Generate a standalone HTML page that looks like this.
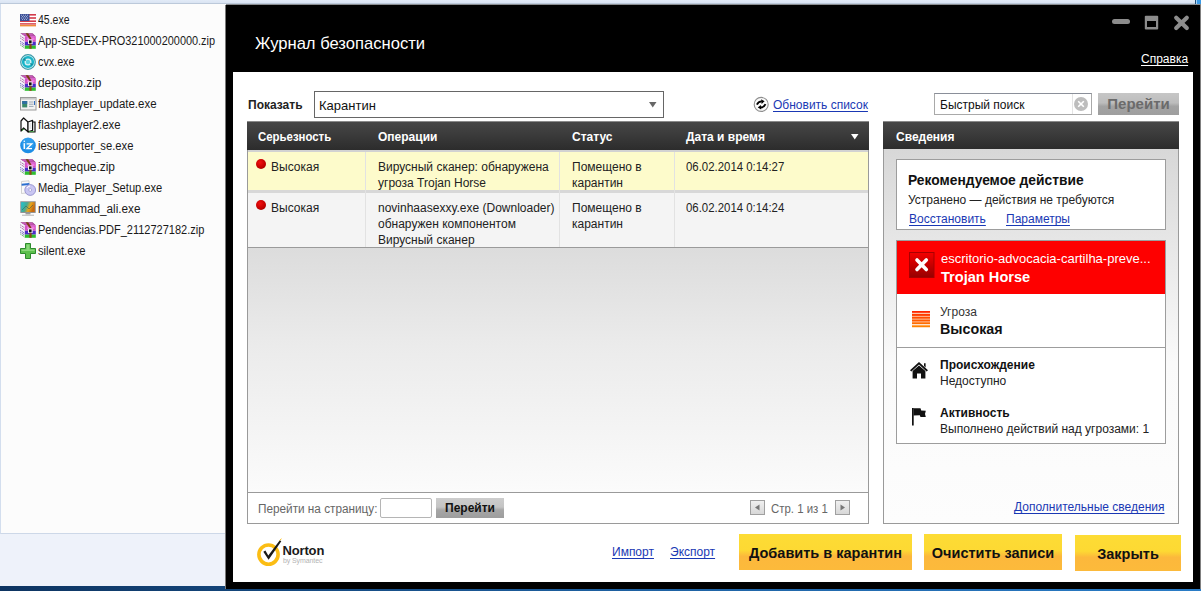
<!DOCTYPE html>
<html><head><meta charset="utf-8">
<style>
*{margin:0;padding:0;box-sizing:border-box}
html,body{width:1201px;height:591px;overflow:hidden;background:#eef2fa;font-family:"Liberation Sans",sans-serif;font-size:12px;color:#222}
.a{position:absolute;white-space:nowrap}
#topband{left:0;top:0;width:1201px;height:5px;background:linear-gradient(#e2ebf7,#dbe5f3 50%,#b4c2d4 75%,#6e6a64)}
#left{left:0;top:4px;width:226px;height:530px;background:#fcfcfc;border-left:1px solid #d3deee;border-bottom:1px solid #cdd8e8}
#taskbar{left:0;top:586px;width:1201px;height:5px;background:linear-gradient(90deg,#0d3461,#1d5f9f 50%,#2a7cc6)}
.fi{left:38px;font-size:12px;line-height:16px;color:#1a1a1a}
.ic{left:20px;width:16px;height:16px}
#win{left:225px;top:5px;width:976px;height:584px;background:#000;border-left:1px solid #7a7a7a;border-right:1px solid #808080}
#inner{left:233px;top:72px;width:960px;height:510px;background:#fff}
#title{left:255px;top:34px;font-size:16.6px;line-height:20px;color:#fff}
.a.lnk,.lnk{color:#1a38b4;text-decoration:underline;text-underline-offset:2px}
.hdr{background:linear-gradient(#474747,#2c2c2c);border-top:1px solid #8a8a8a}
.ht{font-weight:bold;color:#fff;font-size:12px;line-height:16px}
.cell{font-size:12px;line-height:16px;color:#222}
.btn{background:linear-gradient(#fddc35 0%,#fdd933 45%,#fcb83c 62%,#fcba3b 100%);font-weight:bold;font-size:14.5px;color:#111;text-align:center;padding-top:1px}
</style></head><body>
<div id="topband" class="a"></div>
<div class="a" style="left:1195px;top:0;width:1px;height:4px;background:#1d4f7a"></div><div class="a" style="left:1196px;top:0;width:1px;height:4px;background:#a8d4f8"></div><div class="a" style="left:1197px;top:0;width:4px;height:4px;background:#3a9ae6"></div>
<div id="left" class="a"></div>
<div id="taskbar" class="a"></div>

<!-- file list -->
<div class="a fi" style="top:12px;transform:scaleX(0.875);transform-origin:0 0">45.exe</div>
<div class="a fi" style="top:33px;transform:scaleX(0.909);transform-origin:0 0">App-SEDEX-PRO321000200000.zip</div>
<div class="a fi" style="top:54px;transform:scaleX(0.897);transform-origin:0 0">cvx.exe</div>
<div class="a fi" style="top:75px;transform:scaleX(0.99);transform-origin:0 0">deposito.zip</div>
<div class="a fi" style="top:96px;transform:scaleX(0.955);transform-origin:0 0">flashplayer_update.exe</div>
<div class="a fi" style="top:117px;transform:scaleX(0.944);transform-origin:0 0">flashplayer2.exe</div>
<div class="a fi" style="top:138px;transform:scaleX(0.935);transform-origin:0 0">iesupporter_se.exe</div>
<div class="a fi" style="top:159px;transform:scaleX(0.995);transform-origin:0 0">imgcheque.zip</div>
<div class="a fi" style="top:180px;transform:scaleX(0.927);transform-origin:0 0">Media_Player_Setup.exe</div>
<div class="a fi" style="top:201px;transform:scaleX(0.979);transform-origin:0 0">muhammad_ali.exe</div>
<div class="a fi" style="top:222px;transform:scaleX(0.918);transform-origin:0 0">Pendencias.PDF_2112727182.zip</div>
<div class="a fi" style="top:243px;transform:scaleX(0.937);transform-origin:0 0">silent.exe</div>


<!-- file icons -->
<svg class="a" style="left:20px;top:14px" width="16" height="13" viewBox="0 0 16 13">
<rect x="0" y="0" width="16" height="12.4" fill="#fff"/>
<rect x="0" y="0" width="16" height="1.6" fill="#d33a4a"/>
<rect x="0" y="3.2" width="16" height="1.6" fill="#d33a4a"/>
<rect x="0" y="6.4" width="16" height="1.6" fill="#d33a4a"/>
<rect x="0" y="9.2" width="16" height="1.4" fill="#d33a4a"/>
<rect x="0" y="10.8" width="16" height="1.6" fill="#f08a3c"/>
<rect x="0" y="0" width="9.5" height="7" fill="#3b4f96"/>
<path d="M1 1.2h1M3 1.2h1M5 1.2h1M7 1.2h1M2 2.6h1M4 2.6h1M6 2.6h1M1 4h1M3 4h1M5 4h1M7 4h1M2 5.4h1M4 5.4h1M6 5.4h1" stroke="#c8d0ea" stroke-width="0.8"/>
</svg>
<svg class="a" style="left:20px;top:33px" width="16" height="16" viewBox="0 0 16 16">
<path d="M0 0.3 L12.6 0.3 L15.8 3.2 L4.6 3.2 Z" fill="#9c3a8c"/>
<path d="M1.5 0.9 L12.2 0.9 L14.4 2.7 L4.4 2.7 Z" fill="#c85ab8"/>
<rect x="4.6" y="3.2" width="11.2" height="5.6" fill="#d452c4"/>
<rect x="7" y="4.5" width="7.5" height="2.5" fill="#ef7ae0"/>
<rect x="4.6" y="8.8" width="11.2" height="3.8" fill="#4a2ec8"/>
<rect x="4.6" y="12.6" width="11.2" height="3.2" fill="#2fbe2f"/>
<path d="M0 0.3 L4.6 3.2 L4.6 15.8 L0 12.8 Z" fill="#f4f4fa"/>
<path d="M0.4 3 L4.2 5.6 M0.4 5.2 L4.2 7.8" stroke="#8a2a78" stroke-width="0.9" stroke-dasharray="1 0.8"/>
<path d="M0.4 8.4 L4.2 11 M0.4 10.2 L4.2 12.8" stroke="#3a2aa0" stroke-width="0.9" stroke-dasharray="1 0.8"/>
<path d="M0.4 12 L4.2 14.6" stroke="#2a9a2a" stroke-width="0.9" stroke-dasharray="1 0.8"/>
<path d="M5.6 0.3 L8.2 0.3 L11.6 6 L9.6 6 Z" fill="#7a4010"/>
<rect x="9.4" y="10" width="2.2" height="5.8" fill="#8a4a14"/>
<rect x="8" y="6.6" width="4.6" height="4.4" fill="#f0f0f0"/>
<rect x="9" y="7.4" width="2.6" height="3" fill="#111"/>
</svg>
<svg class="a" style="left:20px;top:54px" width="16" height="16" viewBox="0 0 16 16">
<circle cx="8" cy="8" r="7.3" fill="#d9f2f5" stroke="#3c9aa8" stroke-width="1.2"/>
<circle cx="8" cy="8" r="4.8" fill="none" stroke="#19b5c9" stroke-width="2.6"/>
<path d="M2.5 6 L5 4 L6 7 Z" fill="#1a8b9c"/>
<path d="M13.5 10 L11 12 L10 9 Z" fill="#1a8b9c"/>
<circle cx="8" cy="8" r="2.2" fill="#5bd3e0"/>
</svg>
<svg class="a" style="left:20px;top:75px" width="16" height="16" viewBox="0 0 16 16">
<path d="M0 0.3 L12.6 0.3 L15.8 3.2 L4.6 3.2 Z" fill="#9c3a8c"/>
<path d="M1.5 0.9 L12.2 0.9 L14.4 2.7 L4.4 2.7 Z" fill="#c85ab8"/>
<rect x="4.6" y="3.2" width="11.2" height="5.6" fill="#d452c4"/>
<rect x="7" y="4.5" width="7.5" height="2.5" fill="#ef7ae0"/>
<rect x="4.6" y="8.8" width="11.2" height="3.8" fill="#4a2ec8"/>
<rect x="4.6" y="12.6" width="11.2" height="3.2" fill="#2fbe2f"/>
<path d="M0 0.3 L4.6 3.2 L4.6 15.8 L0 12.8 Z" fill="#f4f4fa"/>
<path d="M0.4 3 L4.2 5.6 M0.4 5.2 L4.2 7.8" stroke="#8a2a78" stroke-width="0.9" stroke-dasharray="1 0.8"/>
<path d="M0.4 8.4 L4.2 11 M0.4 10.2 L4.2 12.8" stroke="#3a2aa0" stroke-width="0.9" stroke-dasharray="1 0.8"/>
<path d="M0.4 12 L4.2 14.6" stroke="#2a9a2a" stroke-width="0.9" stroke-dasharray="1 0.8"/>
<path d="M5.6 0.3 L8.2 0.3 L11.6 6 L9.6 6 Z" fill="#7a4010"/>
<rect x="9.4" y="10" width="2.2" height="5.8" fill="#8a4a14"/>
<rect x="8" y="6.6" width="4.6" height="4.4" fill="#f0f0f0"/>
<rect x="9" y="7.4" width="2.6" height="3" fill="#111"/>
</svg>
<svg class="a" style="left:20px;top:97px" width="17" height="14" viewBox="0 0 17 14">
<rect x="0.5" y="0.5" width="15.5" height="12.5" fill="#f2f2f2" stroke="#9a9a9a"/>
<rect x="1" y="1" width="14.5" height="1.6" fill="#c9c9c9"/>
<rect x="2.2" y="4" width="5" height="6.4" fill="#3a8a6a"/>
<rect x="2.2" y="4" width="5" height="3" fill="#2f6fa0"/>
<path d="M9 5h4.5M9 7.2h4.5M9 9.4h4.5" stroke="#9aa6b4" stroke-width="1"/>
<rect x="14" y="4" width="1" height="4" fill="#3470c0"/>
</svg>
<svg class="a" style="left:20px;top:117px" width="16" height="16" viewBox="0 0 16 16">
<path d="M1 4 L3.6 1 L8 5 L8 14.8 L3.6 11 L1 14 Z" fill="#fff" stroke="#111" stroke-width="1.2" stroke-linejoin="round"/>
<path d="M8 5 L12.6 3.4 L12.6 13.4 L8 14.8 Z" fill="#fff" stroke="#111" stroke-width="1.2" stroke-linejoin="round"/>
<path d="M12.6 5 L15 5 L15 15 L8 15" fill="none" stroke="#111" stroke-width="1.2"/>
<path d="M2 13.6 L4 12" stroke="#3aa83a" stroke-width="1"/>
<path d="M9 14.6 L14 14.6" stroke="#3aa83a" stroke-width="0.8"/>
<path d="M9.5 7h2M9.5 9h2M9.5 11h2" stroke="#bbb" stroke-width="0.7"/>
</svg>
<svg class="a" style="left:20px;top:137px" width="16" height="17" viewBox="0 0 16 17">
<circle cx="8" cy="8.5" r="7.8" fill="#1e8ee6"/>
<circle cx="8" cy="6.5" r="6" fill="#3aa6f0" opacity="0.6"/>
<path d="M4.3 6.2 L4.3 12" stroke="#fff" stroke-width="1.5"/>
<circle cx="4.3" cy="4.3" r="0.8" fill="#fff"/>
<path d="M6.6 6.8 L11.8 6.8 L7 11.6 L12 11.6" fill="none" stroke="#fff" stroke-width="1.3"/>
</svg>
<svg class="a" style="left:20px;top:159px" width="16" height="16" viewBox="0 0 16 16">
<path d="M0 0.3 L12.6 0.3 L15.8 3.2 L4.6 3.2 Z" fill="#9c3a8c"/>
<path d="M1.5 0.9 L12.2 0.9 L14.4 2.7 L4.4 2.7 Z" fill="#c85ab8"/>
<rect x="4.6" y="3.2" width="11.2" height="5.6" fill="#d452c4"/>
<rect x="7" y="4.5" width="7.5" height="2.5" fill="#ef7ae0"/>
<rect x="4.6" y="8.8" width="11.2" height="3.8" fill="#4a2ec8"/>
<rect x="4.6" y="12.6" width="11.2" height="3.2" fill="#2fbe2f"/>
<path d="M0 0.3 L4.6 3.2 L4.6 15.8 L0 12.8 Z" fill="#f4f4fa"/>
<path d="M0.4 3 L4.2 5.6 M0.4 5.2 L4.2 7.8" stroke="#8a2a78" stroke-width="0.9" stroke-dasharray="1 0.8"/>
<path d="M0.4 8.4 L4.2 11 M0.4 10.2 L4.2 12.8" stroke="#3a2aa0" stroke-width="0.9" stroke-dasharray="1 0.8"/>
<path d="M0.4 12 L4.2 14.6" stroke="#2a9a2a" stroke-width="0.9" stroke-dasharray="1 0.8"/>
<path d="M5.6 0.3 L8.2 0.3 L11.6 6 L9.6 6 Z" fill="#7a4010"/>
<rect x="9.4" y="10" width="2.2" height="5.8" fill="#8a4a14"/>
<rect x="8" y="6.6" width="4.6" height="4.4" fill="#f0f0f0"/>
<rect x="9" y="7.4" width="2.6" height="3" fill="#111"/>
</svg>
<svg class="a" style="left:20px;top:180px" width="16" height="16" viewBox="0 0 16 16">
<path d="M1.5 1.5 L9 0.8 L9.5 12.5 L1.5 13.5 Z" fill="#fafafa" stroke="#c8c8c8" stroke-width="0.8"/>
<path d="M1.6 3.8 L9.3 3 L9.3 5 L1.6 5.8 Z" fill="#2a6fd0"/>
<circle cx="10.2" cy="10" r="5.4" fill="#c9c6f2" stroke="#8a86c8" stroke-width="0.8"/>
<circle cx="10.2" cy="10" r="1.4" fill="#fff" stroke="#8a86c8" stroke-width="0.6"/>
<path d="M7 8 A3.5 3.5 0 0 1 10 6" stroke="#fff" stroke-width="1" fill="none"/>
</svg>
<svg class="a" style="left:20px;top:201px" width="16" height="16" viewBox="0 0 16 16">
<defs><linearGradient id="mg" x1="0" y1="0" x2="1" y2="0.3"><stop offset="0" stop-color="#19c7d6"/><stop offset="0.45" stop-color="#4aa890"/><stop offset="0.7" stop-color="#e9a61c"/><stop offset="1" stop-color="#c86a10"/></linearGradient></defs>
<rect x="0.3" y="0.3" width="15.4" height="11.6" fill="#888"/>
<rect x="1.2" y="1.2" width="13.6" height="9.8" fill="url(#mg)"/>
<path d="M2 9 L6 5 L9 8 L13 4" stroke="#2a5a50" stroke-width="1" fill="none" opacity="0.5"/>
<rect x="5.5" y="12" width="5" height="1.5" fill="#9a9a9a"/>
<rect x="2" y="13.6" width="12" height="1.4" fill="#c8c8c8"/>
</svg>
<svg class="a" style="left:20px;top:222px" width="16" height="16" viewBox="0 0 16 16">
<path d="M0 0.3 L12.6 0.3 L15.8 3.2 L4.6 3.2 Z" fill="#9c3a8c"/>
<path d="M1.5 0.9 L12.2 0.9 L14.4 2.7 L4.4 2.7 Z" fill="#c85ab8"/>
<rect x="4.6" y="3.2" width="11.2" height="5.6" fill="#d452c4"/>
<rect x="7" y="4.5" width="7.5" height="2.5" fill="#ef7ae0"/>
<rect x="4.6" y="8.8" width="11.2" height="3.8" fill="#4a2ec8"/>
<rect x="4.6" y="12.6" width="11.2" height="3.2" fill="#2fbe2f"/>
<path d="M0 0.3 L4.6 3.2 L4.6 15.8 L0 12.8 Z" fill="#f4f4fa"/>
<path d="M0.4 3 L4.2 5.6 M0.4 5.2 L4.2 7.8" stroke="#8a2a78" stroke-width="0.9" stroke-dasharray="1 0.8"/>
<path d="M0.4 8.4 L4.2 11 M0.4 10.2 L4.2 12.8" stroke="#3a2aa0" stroke-width="0.9" stroke-dasharray="1 0.8"/>
<path d="M0.4 12 L4.2 14.6" stroke="#2a9a2a" stroke-width="0.9" stroke-dasharray="1 0.8"/>
<path d="M5.6 0.3 L8.2 0.3 L11.6 6 L9.6 6 Z" fill="#7a4010"/>
<rect x="9.4" y="10" width="2.2" height="5.8" fill="#8a4a14"/>
<rect x="8" y="6.6" width="4.6" height="4.4" fill="#f0f0f0"/>
<rect x="9" y="7.4" width="2.6" height="3" fill="#111"/>
</svg>
<svg class="a" style="left:20px;top:243px" width="16" height="16" viewBox="0 0 16 16">
<path d="M5.5 0.5 H10.5 V5.5 H15.5 V10.5 H10.5 V15.5 H5.5 V10.5 H0.5 V5.5 H5.5 Z" fill="#5cc04c" stroke="#2c8a2c" stroke-width="1"/>
<path d="M6.5 1.5 H9.5 V6.5 H14.5 V8 H1.5 V6.5 H6.5 Z" fill="#8ad87a"/>
</svg>

<!-- window -->
<div id="win" class="a"></div>
<div id="title" class="a">Журнал безопасности</div>
<div id="inner" class="a"></div>
<div class="a" style="left:1141px;top:51px;color:#fff;text-decoration:underline;text-underline-offset:2px;font-size:12px;line-height:16px">Справка</div>

<!-- show row -->
<div class="a" style="left:248px;top:97px;font-weight:bold;font-size:12px;line-height:16px;color:#222">Показать</div>
<div class="a" style="left:314px;top:91px;width:350px;height:27px;border:1px solid #666;background:#fff"></div>
<div class="a" style="left:319px;top:98px;font-size:13px;line-height:16px;color:#111">Карантин</div>
<div class="a" style="left:773px;top:97px;font-size:12px;line-height:16px" ><span class="lnk">Обновить список</span></div>
<div class="a" style="left:934px;top:93px;width:158px;height:22px;border:1px solid #a9a9a9;border-top-color:#8a8f99;background:#fff"></div>
<div class="a" style="left:940px;top:97px;font-size:12px;line-height:16px;color:#111">Быстрый поиск</div>
<div class="a" style="left:1098px;top:93px;width:81px;height:22px;background:linear-gradient(#c6c6c6,#bdbdbd 45%,#a3a3a3 60%,#9e9e9e)"></div>
<div class="a" style="left:1098px;top:94px;width:81px;text-align:center;font-weight:bold;font-size:15px;line-height:20px;color:#6b6b6b">Перейти</div>

<!-- table -->
<div class="a" style="left:247px;top:121px;width:622px;height:403px;border:1px solid #9a9a9a;background:#fff"></div>
<div class="a hdr" style="left:247px;top:121px;width:622px;height:29px"></div>
<div class="a ht" style="left:258px;top:129px;transform:scaleX(0.95);transform-origin:0 0">Серьезность</div>
<div class="a ht" style="left:378px;top:129px">Операции</div>
<div class="a ht" style="left:572px;top:129px">Статус</div>
<div class="a ht" style="left:686px;top:129px">Дата и время</div>
<!-- list body -->
<div class="a" style="left:248px;top:248px;width:620px;height:244px;background:linear-gradient(#dcdcdc,#ebebeb 40%,#fbfbfb)"></div>
<div class="a" style="left:248px;top:150px;width:620px;height:2px;background:#d2d2d2"></div>
<div class="a" style="left:248px;top:152px;width:620px;height:38px;background:#fdfbcb"></div>
<div class="a" style="left:248px;top:190px;width:620px;height:3px;background:#d8d8d8"></div>
<div class="a" style="left:248px;top:193px;width:620px;height:54px;background:#f4f4f4"></div>
<div class="a" style="left:248px;top:247px;width:620px;height:1px;background:#9a9a9a"></div>
<div class="a" style="left:365px;top:152px;width:1px;height:95px;background:#e2e2e2"></div>
<div class="a" style="left:559px;top:152px;width:1px;height:95px;background:#e2e2e2"></div>
<div class="a" style="left:674px;top:152px;width:1px;height:95px;background:#e2e2e2"></div>
<div class="a" style="left:248px;top:492px;width:620px;height:1px;background:#9a9a9a"></div>

<div class="a" style="left:256px;top:159px;width:10px;height:10px;border-radius:50%;background:radial-gradient(circle at 40% 35%,#f21010,#c00000 60%,#8a0000)"></div>
<div class="a cell" style="left:271px;top:159px">Высокая</div>
<div class="a cell" style="left:378px;top:159px">Вирусный сканер: обнаружена<br>угроза Trojan Horse</div>
<div class="a cell" style="left:572px;top:159px">Помещено в<br>карантин</div>
<div class="a cell" style="left:686px;top:159px;transform:scaleX(0.95);transform-origin:0 0">06.02.2014 0:14:27</div>

<div class="a" style="left:256px;top:200px;width:10px;height:10px;border-radius:50%;background:radial-gradient(circle at 40% 35%,#f21010,#c00000 60%,#8a0000)"></div>
<div class="a cell" style="left:271px;top:200px">Высокая</div>
<div class="a cell" style="left:378px;top:200px">novinhaasexxy.exe (Downloader)<br>обнаружен компонентом<br>Вирусный сканер</div>
<div class="a cell" style="left:572px;top:200px">Помещено в<br>карантин</div>
<div class="a cell" style="left:686px;top:200px;transform:scaleX(0.95);transform-origin:0 0">06.02.2014 0:14:24</div>

<!-- pager -->
<div class="a cell" style="left:258px;top:501px;color:#666;transform:scaleX(0.98);transform-origin:0 0">Перейти на страницу:</div>
<div class="a" style="left:380px;top:498px;width:52px;height:20px;border-radius:2px;border:1px solid #b5b5b5;background:#fff"></div>
<div class="a" style="left:436px;top:498px;width:68px;height:20px;background:linear-gradient(#cdcdcd,#c4c4c4 45%,#a6a6a6 60%,#9d9d9d);text-align:center;font-weight:bold;font-size:12px;line-height:20px;color:#111">Перейти</div>
<div class="a" style="left:750px;top:500px;width:15px;height:15px;border:1px solid #a0a0a0;background:linear-gradient(#f0f0f0,#d8d8d8)"></div>
<div class="a cell" style="left:771px;top:501px;color:#666;transform:scaleX(0.95);transform-origin:0 0">Стр. 1 из 1</div>
<div class="a" style="left:835px;top:500px;width:15px;height:15px;border:1px solid #a0a0a0;background:linear-gradient(#f0f0f0,#d8d8d8)"></div>

<!-- right panel -->
<div class="a" style="left:883px;top:121px;width:296px;height:403px;border:1px solid #9a9a9a;background:linear-gradient(#d3d3d3,#fafafa 60%,#fdfdfd)"></div>
<div class="a hdr" style="left:883px;top:121px;width:296px;height:28px"></div>
<div class="a ht" style="left:896px;top:129px">Сведения</div>
<div class="a" style="left:896px;top:159px;width:270px;height:71px;border:1px solid #9d9d9d;background:#fff"></div>
<div class="a" style="left:908px;top:173px;font-weight:bold;font-size:13.8px;line-height:16px;color:#111">Рекомендуемое действие</div>
<div class="a cell" style="left:908px;top:192px">Устранено — действия не требуются</div>
<div class="a cell lnk" style="left:909px;top:211px">Восстановить</div>
<div class="a cell lnk" style="left:1006px;top:211px">Параметры</div>

<div class="a" style="left:896px;top:240px;width:270px;height:204px;border:1px solid #9d9d9d;background:#fff"></div>
<div class="a" style="left:897px;top:241px;width:268px;height:53px;background:#fe0000"></div>
<div class="a" style="left:941px;top:251px;font-size:13px;line-height:16px;color:#fff">escritorio-advocacia-cartilha-preve...</div>
<div class="a" style="left:941px;top:268px;font-weight:bold;font-size:14.6px;line-height:18px;color:#fff">Trojan Horse</div>
<div class="a" style="left:940px;top:304px;font-size:12px;line-height:16px;color:#333">Угроза</div>
<div class="a" style="left:940px;top:320px;font-weight:bold;font-size:14.3px;line-height:18px;color:#111">Высокая</div>
<div class="a" style="left:897px;top:347px;width:268px;height:1px;background:#9d9d9d"></div>
<div class="a" style="left:940px;top:357px;font-weight:bold;font-size:12px;line-height:16px;color:#111">Происхождение</div>
<div class="a cell" style="left:940px;top:373px">Недоступно</div>
<div class="a" style="left:940px;top:405px;font-weight:bold;font-size:12px;line-height:16px;color:#111">Активность</div>
<div class="a cell" style="left:940px;top:421px">Выполнено действий над угрозами: 1</div>
<div class="a cell lnk" style="left:1014px;top:499px">Дополнительные сведения</div>

<!-- footer -->
<div class="a cell lnk" style="left:612px;top:544px">Импорт</div>
<div class="a cell lnk" style="left:670px;top:544px">Экспорт</div>
<div class="a btn" style="left:739px;top:534px;width:173px;height:36px;line-height:36px">Добавить в карантин</div>
<div class="a btn" style="left:924px;top:534px;width:138px;height:36px;line-height:36px">Очистить записи</div>
<div class="a btn" style="left:1075px;top:535px;width:106px;height:36px;line-height:36px">Закрыть</div>

<!-- window controls -->
<svg class="a" style="left:1105px;top:8px" width="90" height="30" viewBox="1105 8 90 30">
<rect x="1112" y="19" width="18" height="5" rx="2.5" fill="#8c8c8c"/>
<rect x="1144.8" y="15.8" width="13.4" height="13.6" rx="1" fill="#8c8c8c"/>
<rect x="1147" y="21" width="9" height="6" fill="#000"/>
<path d="M1176.2 17.7 L1186.8 28.1 M1186.8 17.7 L1176.2 28.1" stroke="#8c8c8c" stroke-width="4.2" stroke-linecap="round"/>
</svg>
<!-- dropdown arrow -->
<svg class="a" style="left:648px;top:101px" width="10" height="8"><path d="M1 1 L8.5 1 L4.75 6.5 Z" fill="#666"/></svg>
<!-- refresh icon -->
<svg class="a" style="left:753px;top:96px" width="17" height="17" viewBox="0 0 17 17">
<circle cx="8.2" cy="8.4" r="7" fill="#fbfbfb" stroke="#8f8f8f" stroke-width="1.1"/>
<path d="M3.9 8.6 Q5.2 5.4 8.8 5.3" fill="none" stroke="#000" stroke-width="1.8"/>
<path d="M8.2 3.2 L11.6 5.3 L8.6 7.9 Z" fill="#000"/>
<path d="M12.5 8.2 Q11.2 11.4 7.6 11.5" fill="none" stroke="#000" stroke-width="1.8"/>
<path d="M8.2 13.6 L4.8 11.5 L7.8 8.9 Z" fill="#000"/>
</svg>
<!-- search clear -->
<div class="a" style="left:1072px;top:94px;width:1px;height:20px;background:#e4e4e4"></div>
<svg class="a" style="left:1073px;top:96px" width="16" height="16" viewBox="0 0 16 16">
<circle cx="8" cy="8" r="7" fill="#bdbdbd"/>
<path d="M5.2 5.2 L10.8 10.8 M10.8 5.2 L5.2 10.8" stroke="#fff" stroke-width="1.6"/>
</svg>
<!-- sort arrow -->
<svg class="a" style="left:850px;top:133px" width="10" height="8"><path d="M1 1 L8.5 1 L4.75 6.5 Z" fill="#fff"/></svg>
<!-- pager arrows -->
<svg class="a" style="left:750px;top:500px" width="15" height="15"><path d="M5 7.5 L9.5 4.5 L9.5 10.5 Z" fill="#777"/></svg>
<svg class="a" style="left:835px;top:500px" width="15" height="15"><path d="M10 7.5 L5.5 4.5 L5.5 10.5 Z" fill="#777"/></svg>
<!-- X box -->
<svg class="a" style="left:909px;top:252px" width="26" height="26" viewBox="0 0 26 26">
<defs><linearGradient id="xg" x1="0" y1="0" x2="0" y2="1"><stop offset="0" stop-color="#f40000"/><stop offset="1" stop-color="#960000"/></linearGradient></defs>
<rect x="0.5" y="0.5" width="24.5" height="25" fill="url(#xg)" stroke="#a80000" stroke-width="1"/>
<path d="M8 8 L17.3 17.5 M17.3 8 L8 17.5" stroke="#fff" stroke-width="3.6" stroke-linecap="round"/>
</svg>
<!-- threat bars -->
<svg class="a" style="left:912px;top:311px" width="18" height="17" viewBox="0 0 18 17">
<rect x="0" y="0" width="18" height="2" fill="#ff2600"/>
<rect x="0" y="1.8" width="18" height="14.4" fill="#ffd9c2"/>
<rect x="0" y="2.9" width="18" height="2" fill="#ff3d00"/>
<rect x="0" y="5.7" width="18" height="2" fill="#ff4d00"/>
<rect x="0" y="8.5" width="18" height="2" fill="#ff5c00"/>
<rect x="0" y="11.3" width="18" height="2" fill="#ff6c00"/>
<rect x="0" y="14.2" width="18" height="2" fill="#ff8200"/>
<rect x="0" y="13.3" width="18" height="0.9" fill="#fff3e8"/>
</svg>
<!-- house -->
<svg class="a" style="left:909px;top:361px" width="20" height="18" viewBox="0 0 20 18">
<path d="M10 1 L19 9.2 L17.6 10.4 L10 3.6 L2.4 10.4 L1 9.2 Z" fill="#111"/>
<path d="M15 2.2 L16.6 2.2 L16.6 6.4 L15 5 Z" fill="#111"/>
<path d="M3.6 10 L10 4.6 L16.4 10 L16.4 17.4 L12 17.4 L12 12.6 L8 12.6 L8 17.4 L3.6 17.4 Z" fill="#111"/>
</svg>
<!-- flag -->
<svg class="a" style="left:911px;top:407px" width="16" height="19" viewBox="0 0 16 19">
<rect x="1" y="1" width="1.7" height="17.5" fill="#111"/>
<path d="M2.5 1.2 L9.5 1.2 L10.2 3.6 L14.8 3.8 L14 7 L14.8 10 L9.5 10 L8.8 8.2 L2.5 8.6 Z" fill="#111"/>
</svg>
<!-- norton logo -->
<svg class="a" style="left:255px;top:538px" width="72" height="32" viewBox="255 538 72 32">
<circle cx="268.5" cy="554.6" r="9.6" fill="none" stroke="#fbbd14" stroke-width="3.6"/>
<path d="M263.3 551.8 L265.4 550.6 L268.3 555.6 L279.8 540.2 L281.3 541.2 L268.6 559.8 Z" fill="#1a1a1a"/>
<path d="M279.5 540.5 L281.5 538.8" stroke="#fbbd14" stroke-width="1"/>
<text x="282.5" y="555.3" font-family="Liberation Sans" font-weight="bold" font-size="13" letter-spacing="-0.15" fill="#1a1a1a">Norton</text>
<text x="283" y="563.4" font-family="Liberation Sans" font-size="7" letter-spacing="-0.1" fill="#b4b4b4">by Symantec</text>
</svg>
</body></html>
